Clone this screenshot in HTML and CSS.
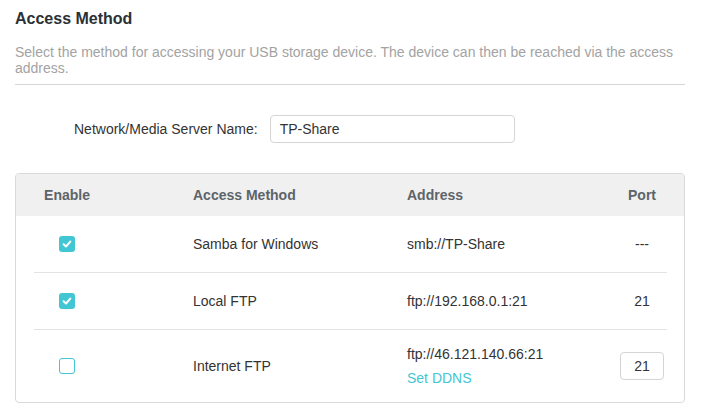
FILE: index.html
```html
<!DOCTYPE html>
<html>
<head>
<meta charset="utf-8">
<link rel="stylesheet" href="styles.css">
</head>
<body>
<div class="page">
  <h1 class="title">Access Method</h1>
  <p class="desc">Select the method for accessing your USB storage device. The device can then be reached via the access address.</p>
  <div class="form-row">
    <label class="form-label">Network/Media Server Name:</label>
    <div class="text-input">TP-Share</div>
  </div>
  <div class="table">
    <div class="thead">
      <div class="c1">Enable</div>
      <div class="c2">Access Method</div>
      <div class="c3">Address</div>
      <div class="c4">Port</div>
    </div>
    <div class="tbody">
      <div class="row">
        <div class="c1"><span class="cb checked"><svg viewBox="0 0 16 16" width="16" height="16"><path d="M4.6 8.2 L7 10.5 L11.3 5.6" fill="none" stroke="#fff" stroke-width="2" stroke-linecap="round" stroke-linejoin="round"/></svg></span></div>
        <div class="c2">Samba for Windows</div>
        <div class="c3">smb://TP-Share</div>
        <div class="c4">---</div>
      </div>
      <div class="row">
        <div class="c1"><span class="cb checked"><svg viewBox="0 0 16 16" width="16" height="16"><path d="M4.6 8.2 L7 10.5 L11.3 5.6" fill="none" stroke="#fff" stroke-width="2" stroke-linecap="round" stroke-linejoin="round"/></svg></span></div>
        <div class="c2">Local FTP</div>
        <div class="c3">ftp://192.168.0.1:21</div>
        <div class="c4">21</div>
      </div>
      <div class="row">
        <div class="c1"><span class="cb"></span></div>
        <div class="c2">Internet FTP</div>
        <div class="c3"><div class="addr-line">ftp://46.121.140.66:21</div><a class="link">Set DDNS</a></div>
        <div class="c4"><div class="port-input">21</div></div>
      </div>
    </div>
  </div>
</div>
</body>
</html>
```
FILE: styles.css
```css
* { box-sizing: border-box; }
html, body { margin: 0; padding: 0; background: #fff; }
body {
  font-family: "Liberation Sans", Arial, sans-serif;
  font-size: 14px;
  color: #333;
}
.page {
  width: 685px;
  padding: 9px 0 0 15px;
}
.title {
  margin: 0;
  font-size: 16px;
  line-height: 20px;
  font-weight: bold;
  color: #2b3135;
}
.desc {
  margin: 15px 0 0;
  padding-bottom: 8px;
  font-size: 14px;
  line-height: 16px;
  color: #a3a3a3;
  border-bottom: 1px solid #d6d6d6;
}
.form-row {
  margin-top: 30px;
  display: flex;
  align-items: center;
  padding-left: 59px;
}
.form-label {
  color: #333;
  line-height: 20px;
  margin-right: 12px;
}
.text-input {
  width: 245px;
  height: 28px;
  border: 1px solid #d4d4d4;
  border-radius: 4px;
  padding: 0 9px;
  line-height: 26px;
  color: #333;
}
.table {
  margin-top: 30px;
  width: 670px;
  border: 1px solid #d9d9d9;
  border-radius: 4px;
  overflow: hidden;
}
.thead, .row {
  display: grid;
  grid-template-columns: 159px 214px 1fr 50px;
  align-items: center;
}
.thead {
  background: #f0f0f0;
  height: 42px;
  padding: 0 17px 0 18px;
  font-weight: bold;
  color: #5d6469;
  line-height: 20px;
}
.tbody {
  padding: 0 17px 0 18px;
}
.row {
  min-height: 57px;
  padding: 14px 0 15px;
  line-height: 20px;
  border-bottom: 1px solid #e3e3e3;
}
.row:last-child {
  border-bottom: none;
  min-height: 72px;
  padding: 14px 0;
}
.c1 {
  width: 66px;
  text-align: center;
  display: flex;
  justify-content: center;
}
.c4 {
  display: flex;
  justify-content: center;
}
.cb {
  display: block;
  width: 16px;
  height: 16px;
  border-radius: 3px;
  border: 1px solid #42c6d4;
  background: #fff;
}
.cb.checked {
  background: #42c6d4;
  border: none;
}
.cb svg { display: block; }
.addr-line { line-height: 20px; }
.link {
  display: block;
  margin-top: 4px;
  color: #42c6d4;
  line-height: 20px;
  text-decoration: none;
}
.port-input {
  width: 44px;
  height: 28px;
  border: 1px solid #d4d4d4;
  border-radius: 4px;
  text-align: center;
  line-height: 26px;
  color: #333;
}
```
